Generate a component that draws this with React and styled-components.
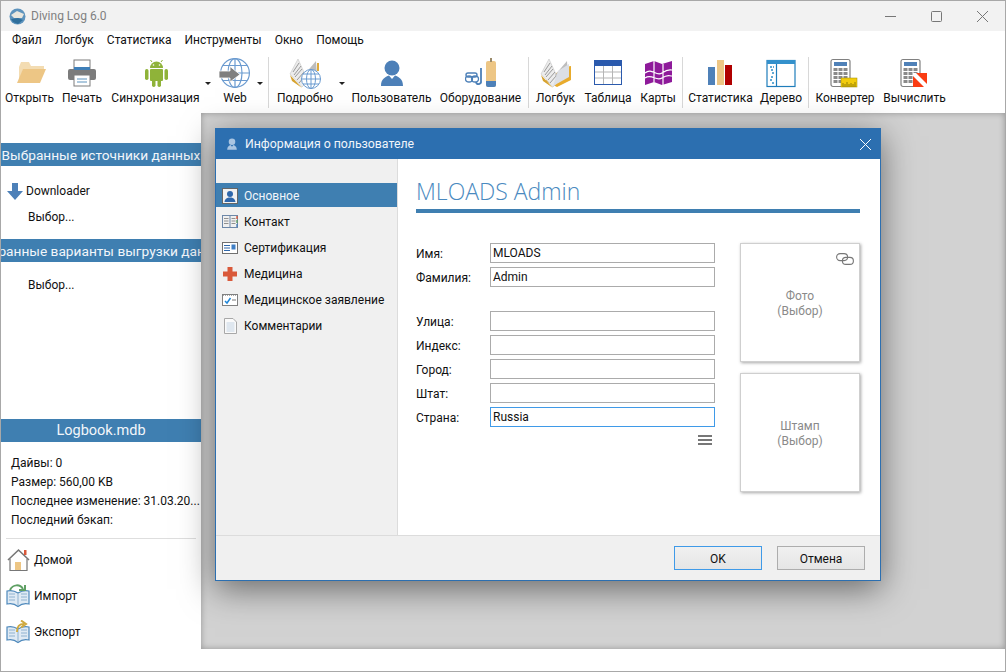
import React from 'react';
import styled, { createGlobalStyle } from 'styled-components';

const Global = createGlobalStyle`
  html, body { margin: 0; padding: 0; background: #fff; }
  body { font-family: Roboto, "Noto Sans", sans-serif; font-size: 12px; color: #111; }
  * { box-sizing: border-box; }
`;

const Win = styled.div`
  position: relative;
  width: 1006px;
  height: 672px;
  border: 1px solid #a8a8a8;
  background: #fff;
  display: flex;
  flex-direction: column;
  overflow: hidden;
`;
const TitleBar = styled.div`
  height: 30px;
  background: #f2f2f2;
  display: flex;
  align-items: center;
  gap: 5px;
  padding-left: 8px;
  color: #808080;
`;
const WinButtons = styled.div`
  margin-left: auto;
  display: flex;
  align-items: center;
  gap: 35px;
  padding-right: 17px;
`;
const Menu = styled.div`
  height: 20px;
  display: flex;
  align-items: center;
  gap: 13px;
  padding: 0 0 2px 11px;
`;
const Toolbar = styled.div`
  height: 62px;
  display: flex;
  padding-top: 6px;
`;
const ToolButton = styled.div`
  width: ${(p) => p.$w}px;
  flex: none;
  display: flex;
  flex-direction: column;
  align-items: center;
  svg { display: block; flex: none; }
`;
const ToolLabel = styled.span`
  margin-top: 1px;
  line-height: 16px;
  white-space: nowrap;
`;
const DropArrow = styled.i`
  flex: none;
  width: 6px;
  height: 3px;
  margin: 25px 0 0 ${(p) => p.$pull || 0}px;
  border-left: 3px solid transparent;
  border-right: 3px solid transparent;
  border-top: 3px solid #222;
`;
const Sep = styled.i`
  flex: none;
  width: 1px;
  height: 51px;
  background: #d8d8d8;
  margin: 0 2px 0 ${(p) => p.$left}px;
`;
const Main = styled.div`
  flex: 1;
  display: flex;
  min-height: 0;
`;
const LeftPanel = styled.div`
  width: 200px;
  flex: none;
  display: flex;
  flex-direction: column;
  padding-top: 30px;
`;
const PanelHead = styled.div`
  height: 23px;
  background: #3f7fb1;
  color: #f2f6fa;
  font-size: 13.7px;
  display: flex;
  align-items: center;
  justify-content: center;
  white-space: nowrap;
  overflow: hidden;
`;
const SourceRow = styled.div`
  display: flex;
  align-items: center;
  gap: 3px;
  height: 20px;
  margin: 15px 0 0 6px;
`;
const Pick = styled.div`
  margin: 6px 0 0 27px;
  line-height: 20px;
`;
const OutputHead = styled(PanelHead)`
  margin-top: 12px;
`;
const PickSecond = styled(Pick)`
  margin-top: 13px;
`;
const LogbookHead = styled(PanelHead)`
  font-size: 14.5px;
`;
const Stats = styled.div`
  margin-top: auto;
`;
const StatLines = styled.div`
  padding: 12px 0 0 10px;
  div { height: 19px; line-height: 19px; white-space: nowrap; }
`;
const Rule = styled.hr`
  border: 0;
  height: 1px;
  background: #dedede;
  margin: 8px 5px 0 5px;
`;
const NavList = styled.div`
  padding: 10px 0 28px 5px;
  display: flex;
  flex-direction: column;
  gap: 14px;
`;
const NavRow = styled.div`
  display: flex;
  align-items: center;
  gap: 4px;
  height: 22px;
`;
const Backdrop = styled.div`
  flex: 1;
  display: flex;
  flex-direction: column;
`;
const Grey = styled.div`
  flex: 1;
  background: #d2d2d2;
  box-shadow: inset 0 0 6px rgba(0, 0, 0, 0.3);
`;
const BottomStrip = styled.div`
  height: 22px;
  background: #fff;
`;

const Dialog = styled.div`
  position: absolute;
  left: 214px;
  top: 127px;
  width: 666px;
  height: 453px;
  border: 1px solid #2c6fb0;
  background: #fff;
  display: flex;
  flex-direction: column;
  box-shadow: 0 8px 32px rgba(0, 0, 0, 0.5);
`;
const DlgTitle = styled.div`
  height: 30px;
  flex: none;
  background: #2c6fb0;
  color: #f1f5fa;
  display: flex;
  align-items: center;
  padding: 0 9px;
  gap: 6px;
  font-size: 12.3px;
`;
const DlgClose = styled.span`
  margin-left: auto;
  display: flex;
`;
const DlgBody = styled.div`
  flex: 1;
  display: flex;
  min-height: 0;
`;
const Side = styled.div`
  width: 182px;
  flex: none;
  background: #f0f0f0;
  border-right: 1px solid #dcdcdc;
  padding-top: 24px;
  display: flex;
  flex-direction: column;
  gap: 2px;
`;
const SideItem = styled.div`
  height: 24px;
  display: flex;
  align-items: center;
  gap: 6px;
  padding: 2px 0 0 6px;
  background: ${(p) => (p.$active ? '#3f7fb1' : 'transparent')};
  color: ${(p) => (p.$active ? '#f2f6fa' : '#111')};
  white-space: nowrap;
  svg { flex: none; }
`;
const Content = styled.div`
  flex: 1;
  padding: 15px 20px 0 18px;
`;
const Heading = styled.div`
  font-family: "Open Sans", sans-serif;
  font-weight: 300;
  font-size: 23px;
  line-height: 35px;
  color: #4a8ac0;
  border-bottom: 4px solid #3f7fb1;
`;
const Columns = styled.div`
  display: flex;
  justify-content: space-between;
  margin-top: 30px;
`;
const Form = styled.div`
  width: 299px;
  display: flex;
  flex-direction: column;
  gap: 4px;
`;
const Field = styled.label`
  display: flex;
  align-items: center;
  height: 20px;
  margin-top: ${(p) => p.$top || 0}px;
`;
const FieldName = styled.span`
  width: 74px;
  flex: none;
  padding-top: 2px;
`;
const Input = styled.div`
  flex: 1;
  height: 20px;
  border: 1px solid ${(p) => (p.$focus ? '#3f9ae8' : '#ababab')};
  background: #fff;
  padding-left: 2px;
  line-height: 18px;
`;
const MoreRow = styled.div`
  display: flex;
  justify-content: flex-end;
  padding: 4px 3px 0 0;
`;
const Pictures = styled.div`
  width: 120px;
  display: flex;
  flex-direction: column;
  gap: 11px;
`;
const Picture = styled.div`
  position: relative;
  height: 119px;
  padding-top: 2px;
  border: 1px solid #cfcfcf;
  box-shadow: 1px 1px 3px rgba(0, 0, 0, 0.35);
  display: flex;
  align-items: center;
  justify-content: center;
  text-align: center;
  color: #8a8a8a;
  line-height: 15px;
`;
const LinkMark = styled.span`
  position: absolute;
  top: 9px;
  right: 5px;
  display: flex;
`;
const Footer = styled.div`
  height: 45px;
  flex: none;
  background: #f0f0f0;
  border-top: 1px solid #dcdcdc;
  display: flex;
  justify-content: flex-end;
  gap: 15px;
  padding: 10px 15px 0 0;
`;
const Button = styled.div`
  width: 88px;
  height: 24px;
  padding-top: 2px;
  border: 1px solid ${(p) => (p.$primary ? '#3f9ae8' : '#adadad')};
  background: linear-gradient(#f0f0f0, #e5e5e5);
  display: flex;
  align-items: center;
  justify-content: center;
`;

const Logo = () => (
  <svg width="17" height="17" viewBox="0 0 17 17">
    <circle cx="8.5" cy="8.5" r="8" fill="#5d93bd" />
    <path d="M2 7 L8 3 L15 6 L13 10 L5 10 Z" fill="#e8e6de" />
    <path d="M2 11 L9 10 L14 12 L9 16 L4 14 Z" fill="#2f6f9c" />
  </svg>
);
const Folder = () => (
  <svg width="32" height="32" viewBox="0 0 32 32">
    <path d="M5 10 L5 25 L9 13 L30 13 L30 9 L17 9 L15 5 L7 5 Z" fill="#f3dcb2" />
    <path d="M9 12 L32 12 L26 26 L3 26 Z" fill="#edc685" />
  </svg>
);
const Printer = () => (
  <svg width="32" height="32" viewBox="0 0 32 32">
    <rect x="8" y="3" width="16" height="9" fill="#fff" stroke="#7c7c7c" />
    <rect x="2" y="12" width="28" height="11" rx="2" fill="#7c7c7c" />
    <rect x="8" y="10" width="16" height="3" fill="#3f7fb8" />
    <rect x="8" y="18" width="16" height="11" fill="#fff" stroke="#7c7c7c" />
    <path d="M11 22 H21 M11 25 H21" stroke="#5d93bd" />
  </svg>
);
const Android = () => (
  <svg width="32" height="32" viewBox="0 0 32 32" fill="#8fb339">
    <path d="M10 11 a6.5 6.5 0 0 1 13 0 Z" />
    <path d="M12 5 L10.5 3 M21 5 L22.5 3" stroke="#8fb339" />
    <rect x="10" y="12" width="13" height="12" rx="1" />
    <rect x="5" y="12" width="3.5" height="11" rx="1.7" />
    <rect x="24.5" y="12" width="3.5" height="11" rx="1.7" />
    <rect x="12" y="22" width="3.5" height="8" rx="1.7" />
    <rect x="17.5" y="22" width="3.5" height="8" rx="1.7" />
    <circle cx="13.5" cy="8" r="0.8" fill="#fff" />
    <circle cx="19.5" cy="8" r="0.8" fill="#fff" />
  </svg>
);
const Globe = () => (
  <svg width="32" height="32" viewBox="0 0 32 32" fill="none">
    <g stroke="#6b9bd0" strokeWidth="1.2">
      <circle cx="16" cy="16" r="14.4" />
      <ellipse cx="16" cy="16" rx="7" ry="14.4" />
      <path d="M16 1.6 V30.4 M1.6 16 H30.4 M4 8.5 H28 M4 23.5 H28" />
    </g>
    <path d="M0 14 H11 V9.5 L21 17.5 L11 25 V21 H0 Z" fill="#7f7f7f" stroke="#fff" strokeWidth="0.8" />
  </svg>
);
const Pages = () => (
  <>
    <path d="M1 17 L9 2 L19 24 L13 30 Z" fill="#ececec" stroke="#c4c4c4" strokeWidth="0.6" />
    <path d="M4 15 L10 6 M5 18 L12 9 M6 20 L13 12 M8 23 L15 15 M10 26 L16 19" stroke="#9a9a9a" />
    <path d="M15 18 L27 4 L28 18 L18 26 Z" fill="#bdbdbd" />
    <path d="M1 18 L12 30 L13 31 L3 24 Z" fill="#d6a22e" />
  </>
);
const Details = () => (
  <svg width="32" height="32" viewBox="0 0 32 32" fill="none">
    <Pages />
    <rect x="28" y="6" width="2" height="8" fill="#e0ab3c" />
    <circle cx="22" cy="22" r="9.5" fill="#fff" stroke="#6b9bd0" />
    <ellipse cx="22" cy="22" rx="4.5" ry="9.5" stroke="#6b9bd0" />
    <path d="M12.5 22 H31.5 M14 17 H30 M14 27 H30 M22 12.5 V31.5" stroke="#6b9bd0" />
  </svg>
);
const UserBust = ({ size = 32, color = '#4d80b8' }) => (
  <svg width={size} height={size} viewBox="0 0 32 32" fill={color}>
    <circle cx="16" cy="11" r="7.5" />
    <path d="M5 29 C5 22 9 20 13 18.5 L16 22 L19 18.5 C23 20 27 22 27 29 Z" />
  </svg>
);
const Gear = () => (
  <svg width="32" height="32" viewBox="0 0 32 32" fill="none">
    <rect x="21" y="4" width="10" height="26" rx="2" fill="#edc685" />
    <path d="M21 24 H31 V28 a2 2 0 0 1 -2 2 H23 a2 2 0 0 1 -2 -2Z" fill="#4d80b8" />
    <rect x="25" y="1" width="2" height="4" fill="#9a8a6a" />
    <path d="M16 11 V24 a2.5 2.5 0 0 1 -5 1" stroke="#4d80b8" strokeWidth="1.8" />
    <rect x="1" y="16" width="11" height="4" rx="2" stroke="#4d80b8" strokeWidth="1.4" />
    <ellipse cx="4" cy="22" rx="3.5" ry="3" stroke="#4d80b8" strokeWidth="1.3" />
    <ellipse cx="10" cy="22" rx="3.5" ry="3" stroke="#4d80b8" strokeWidth="1.3" />
  </svg>
);
const Logbook = () => (
  <svg width="32" height="32" viewBox="0 0 32 32" fill="none">
    <path d="M25 10 L31 9 V23 L17 30 L5 24 Z" fill="#e8ab2c" />
    <Pages />
    <path d="M13 29 L29 20 V7 L18 14 Z" fill="#dcdfe5" />
  </svg>
);
const Table = () => (
  <svg width="32" height="32" viewBox="0 0 32 32">
    <rect x="2.5" y="3.5" width="27" height="24" fill="#fff" stroke="#2b5aad" />
    <rect x="2" y="3" width="28" height="6" fill="#2b5aad" />
    <path d="M3 15 H29 M3 21 H29 M11.5 9 V27 M20.5 9 V27" stroke="#b5b5b5" />
  </svg>
);
const MapIcon = () => (
  <svg width="32" height="32" viewBox="0 0 32 32" fill="#8e1a9a">
    <path d="M3 7 L12 4 L20 7 L30 4 V25 L20 28 L12 25 L3 28 Z" />
    <path d="M3 16 C10 10 14 20 20 16 S27 13 30 13 M3 21 C10 16 14 25 20 21 S27 19 30 19 M12 4 V25 M21 7 V28" stroke="#fff" strokeWidth="1.2" fill="none" />
  </svg>
);
const Bars = () => (
  <svg width="32" height="32" viewBox="0 0 32 32">
    <rect x="3" y="10" width="7" height="18" fill="#4f81b8" />
    <rect x="12" y="3" width="7" height="25" fill="#edc685" />
    <rect x="20" y="8" width="7" height="20" fill="#b00000" />
  </svg>
);
const Tree = () => (
  <svg width="32" height="32" viewBox="0 0 32 32" fill="none">
    <rect x="2" y="3.5" width="28" height="26" fill="#fff" stroke="#1f7dbb" strokeWidth="1.2" />
    <rect x="2" y="3" width="28" height="4" fill="#3491cc" />
    <path d="M11.5 7 V30" stroke="#1f7dbb" strokeWidth="1.2" />
    <path d="M5 10 H9 M6 13 H8 M7 16 H9 M6 20 H9 M5 23 H8 M7 26 H9" stroke="#2f8fc6" strokeWidth="1.4" strokeDasharray="2 1" />
  </svg>
);
const Calc = ({ badge }) => (
  <svg width="32" height="32" viewBox="0 0 32 32">
    <rect x="2" y="2.5" width="19" height="27" rx="2" fill="#fff" stroke="#808080" strokeWidth="1.2" />
    <rect x="5" y="5" width="13" height="4" fill="#4f81b8" />
    <g fill="#8a8a8a">
      {[11, 15, 19, 23].map((y) =>
        [4.5, 9.5, 14.5].map((x) => <rect key={`${x}-${y}`} x={x} y={y} width="4" height="3" />)
      )}
    </g>
    {badge === 'ruler' ? (
      <>
        <rect x="12" y="21" width="16" height="9" fill="#f2cc0c" stroke="#a08a00" strokeWidth="0.5" />
        <path d="M14 30 V26 M16 30 V27 M18 30 V25 M20 30 V27 M22 30 V26 M24 30 V27 M26 30 V25" stroke="#7a6a00" strokeWidth="0.8" />
      </>
    ) : (
      <>
        <rect x="14" y="16" width="14" height="14" fill="#fa3c12" />
        <path d="M14 16 L17 16 L28 27 L28 30 L25 30 L14 19 Z" fill="#fff" />
      </>
    )}
  </svg>
);

const DownArrow = () => (
  <svg width="16" height="17" viewBox="0 0 16 17">
    <path d="M5 0 H11 V8 H16 L8 17 L0 8 H5 Z" fill="#4d80b8" />
  </svg>
);
const Home = () => (
  <svg width="24" height="24" viewBox="0 0 24 24" fill="none">
    <path d="M4 11 V22.5 H21 V11" stroke="#777" strokeWidth="1.2" fill="#fff" />
    <path d="M2 12 L12.5 2 L23 12" stroke="#777" strokeWidth="1.6" />
    <rect x="9" y="14" width="6" height="8" fill="#edc685" />
    <rect x="18" y="2" width="2.5" height="5" fill="#d9583a" />
  </svg>
);
const Book = ({ kind }) => (
  <svg width="24" height="24" viewBox="0 0 24 24" fill="none">
    <path d="M1 7 C5 6 9 7 12 9 C15 7 19 6 23 7 V20 C19 19 15 20 12 22.5 C9 20 5 19 1 20 Z" fill="#dfeaf4" stroke="#4d88bb" strokeWidth="1.2" />
    <path d="M12 9 V22 M3 10 H9 M3 13 H9 M3 16 H9 M15 10 H21 M15 13 H21 M15 16 H21" stroke="#8fb2d0" />
    {kind === 'in' ? (
      <path d="M4 6 C7 0 14 0 17 5 M13 6 H19 V1" stroke="#5fa064" strokeWidth="2" />
    ) : (
      <path d="M11 12 C11 6 13 4 18 4 M15 0.5 L20 4 L15 7.5" stroke="#cfa93f" strokeWidth="2" />
    )}
  </svg>
);

const SmallUser = () => (
  <svg width="16" height="16" viewBox="0 0 16 16">
    <rect x="0.5" y="0.5" width="15" height="15" fill="#f2f2f2" stroke="#666" />
    <circle cx="8" cy="6" r="3" fill="#2e67ab" />
    <path d="M2.5 14 C3 10.5 5 10 6.5 9.5 H9.5 C11 10 13 10.5 13.5 14Z" fill="#2e67ab" />
  </svg>
);
const SmallContact = () => (
  <svg width="16" height="16" viewBox="0 0 16 16" fill="none">
    <rect x="0.5" y="1.5" width="15" height="12" stroke="#6d87a8" />
    <path d="M8 2 V13" stroke="#6d87a8" />
    <path d="M2 4.5 H6.5 M2 7 H6.5 M2 9.5 H6.5 M9.5 4.5 H13.5 M9.5 7 H13.5 M9.5 9.5 H13.5" stroke="#909090" />
    <path d="M15 2 V5" stroke="#d9583a" strokeWidth="1.4" />
    <path d="M15 6 V9" stroke="#5fa064" strokeWidth="1.4" />
    <path d="M15 10 V13" stroke="#4d80b8" strokeWidth="1.4" />
  </svg>
);
const SmallCert = () => (
  <svg width="16" height="16" viewBox="0 0 16 16" fill="none">
    <rect x="0.5" y="2.5" width="15" height="11" fill="#fff" stroke="#707070" />
    <path d="M2 5.5 H8 M2 8 H8 M2 10.5 H8" stroke="#2e67ab" />
    <rect x="9.5" y="4.5" width="4" height="5" fill="#3f7fc5" />
  </svg>
);
const SmallCross = () => (
  <svg width="16" height="16" viewBox="0 0 16 16">
    <path d="M5.5 1 H10.5 V5.5 H15 V10.5 H10.5 V15 H5.5 V10.5 H1 V5.5 H5.5Z" fill="#d9593a" />
  </svg>
);
const SmallCheck = () => (
  <svg width="16" height="16" viewBox="0 0 16 16" fill="none">
    <rect x="0.5" y="2.5" width="15" height="11" fill="#fff" stroke="#808080" />
    <path d="M1 3.5 H15" stroke="#aaa" strokeDasharray="1 1" />
    <path d="M3 9 L5 11 L8.5 6" stroke="#1f86d8" strokeWidth="1.5" />
    <path d="M10 8 H14" stroke="#777" />
  </svg>
);
const SmallNote = () => (
  <svg width="16" height="16" viewBox="0 0 16 16" fill="none">
    <path d="M2.5 0.5 H11 L14.5 4 V15.5 H2.5 Z" fill="#fafafa" stroke="#a8a8a8" />
    <path d="M4.5 5 H12.5 M4.5 7 H12.5 M4.5 9 H12.5 M4.5 11 H12.5 M4.5 13 H12.5" stroke="#c4d4e4" />
  </svg>
);

const tools = [
  { label: 'Открыть', w: 57, icon: <Folder /> },
  { label: 'Печать', w: 48, icon: <Printer /> },
  { label: 'Синхронизация', w: 99, icon: <Android />, arrow: 0 },
  { label: 'Web', w: 48, icon: <Globe />, arrow: -2, sep: 5 },
  { label: 'Подробно', w: 68, icon: <Details />, arrow: 0 },
  { label: 'Пользователь', w: 93, icon: <UserBust /> },
  { label: 'Оборудование', w: 85, icon: <Gear />, sep: 5 },
  { label: 'Логбук', w: 49, icon: <Logbook /> },
  { label: 'Таблица', w: 56, icon: <Table /> },
  { label: 'Карты', w: 44, icon: <MapIcon />, sep: 2 },
  { label: 'Статистика', w: 71, icon: <Bars /> },
  { label: 'Дерево', w: 50, icon: <Tree />, sep: 2 },
  { label: 'Конвертер', w: 68, icon: <Calc badge="ruler" /> },
  { label: 'Вычислить', w: 71, icon: <Calc badge="flag" /> },
];

const sideItems = [
  { label: 'Основное', icon: <SmallUser />, active: true },
  { label: 'Контакт', icon: <SmallContact /> },
  { label: 'Сертификация', icon: <SmallCert /> },
  { label: 'Медицина', icon: <SmallCross /> },
  { label: 'Медицинское заявление', icon: <SmallCheck /> },
  { label: 'Комментарии', icon: <SmallNote /> },
];

const fields = [
  { name: 'Имя:', value: 'MLOADS' },
  { name: 'Фамилия:', value: 'Admin' },
  { name: 'Улица:', top: 20 },
  { name: 'Индекс:' },
  { name: 'Город:' },
  { name: 'Штат:' },
  { name: 'Страна:', value: 'Russia', focus: true },
];

export default function App() {
  return (
    <Win>
      <Global />
      <TitleBar>
        <Logo />
        Diving Log 6.0
        <WinButtons>
          <svg width="11" height="11" viewBox="0 0 11 11"><path d="M0 5.5 H11" stroke="#777" /></svg>
          <svg width="11" height="11" viewBox="0 0 11 11"><rect x="0.5" y="0.5" width="10" height="10" rx="1" fill="none" stroke="#777" /></svg>
          <svg width="11" height="11" viewBox="0 0 11 11"><path d="M0 0 L11 11 M11 0 L0 11" stroke="#777" /></svg>
        </WinButtons>
      </TitleBar>
      <Menu>
        {['Файл', 'Логбук', 'Статистика', 'Инструменты', 'Окно', 'Помощь'].map((m) => (
          <span key={m}>{m}</span>
        ))}
      </Menu>
      <Toolbar>
        {tools.map((t) => (
          <React.Fragment key={t.label}>
            <ToolButton $w={t.w}>
              {t.icon}
              <ToolLabel>{t.label}</ToolLabel>
            </ToolButton>
            {t.arrow !== undefined && <DropArrow $pull={t.arrow} />}
            {t.sep && <Sep $left={t.sep} />}
          </React.Fragment>
        ))}
      </Toolbar>
      <Main>
        <LeftPanel>
          <PanelHead>Выбранные источники данных</PanelHead>
          <SourceRow>
            <DownArrow />
            Downloader
          </SourceRow>
          <Pick>Выбор...</Pick>
          <OutputHead>Выбранные варианты выгрузки данных</OutputHead>
          <PickSecond>Выбор...</PickSecond>
          <Stats>
            <LogbookHead>Logbook.mdb</LogbookHead>
            <StatLines>
              <div>Дайвы: 0</div>
              <div>Размер: 560,00 KB</div>
              <div>Последнее изменение: 31.03.20...</div>
              <div>Последний бэкап:</div>
            </StatLines>
            <Rule />
            <NavList>
              <NavRow><Home />Домой</NavRow>
              <NavRow><Book kind="in" />Импорт</NavRow>
              <NavRow><Book kind="out" />Экспорт</NavRow>
            </NavList>
          </Stats>
        </LeftPanel>
        <Backdrop>
          <Grey />
          <BottomStrip />
        </Backdrop>
      </Main>
      <Dialog>
        <DlgTitle>
          <UserBust size={14} color="#a9c5e2" />
          Информация о пользователе
          <DlgClose>
            <svg width="11" height="11" viewBox="0 0 11 11"><path d="M0 0 L11 11 M11 0 L0 11" stroke="#fff" /></svg>
          </DlgClose>
        </DlgTitle>
        <DlgBody>
          <Side>
            {sideItems.map((s) => (
              <SideItem key={s.label} $active={s.active}>
                {s.icon}
                {s.label}
              </SideItem>
            ))}
          </Side>
          <Content>
            <Heading>MLOADS Admin</Heading>
            <Columns>
              <Form>
                {fields.map((f) => (
                  <Field key={f.name} $top={f.top}>
                    <FieldName>{f.name}</FieldName>
                    <Input $focus={f.focus}>{f.value}</Input>
                  </Field>
                ))}
                <MoreRow>
                  <svg width="14" height="10" viewBox="0 0 14 10"><path d="M0 1 H14 M0 5 H14 M0 9 H14" stroke="#777" strokeWidth="2" /></svg>
                </MoreRow>
              </Form>
              <Pictures>
                <Picture>
                  <LinkMark>
                    <svg width="18" height="12" viewBox="0 0 18 12" fill="none" stroke="#777" strokeWidth="1.1">
                      <rect x="0.6" y="0.6" width="11" height="7" rx="3.5" />
                      <rect x="6.4" y="4.4" width="11" height="7" rx="3.5" />
                    </svg>
                  </LinkMark>
                  Фото<br />(Выбор)
                </Picture>
                <Picture>Штамп<br />(Выбор)</Picture>
              </Pictures>
            </Columns>
          </Content>
        </DlgBody>
        <Footer>
          <Button $primary>OK</Button>
          <Button>Отмена</Button>
        </Footer>
      </Dialog>
    </Win>
  );
}
